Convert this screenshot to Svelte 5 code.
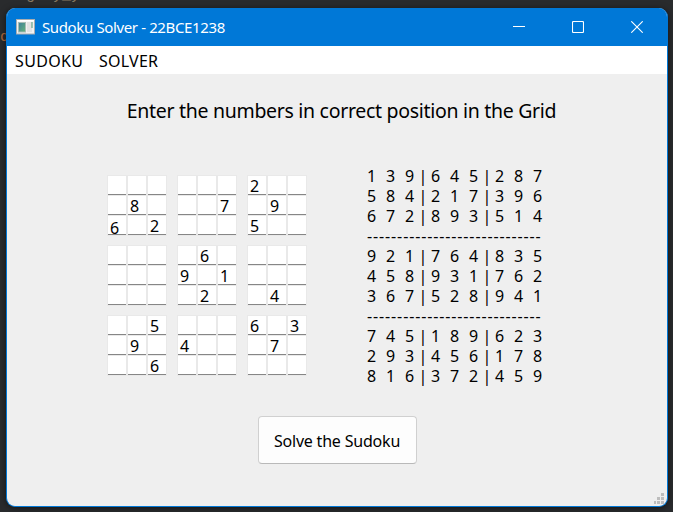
<script>
  const given = [
    '......2..', '.8...7.9.', '6.2...5..',
    '....6....', '...9.1...', '....2..4.',
    '..5...6.3', '.9.4...7.', '..6......'
  ];
  const solved = [
    '139645287', '584217396', '672893514',
    '921764835', '458931762', '367528941',
    '745189623', '293456178', '816372459'
  ];
  const idx = [0, 1, 2];
</script>

<div class="desktop">
  <span class="behind a">gray_y</span>
  <span class="behind b">ud</span>
  <div class="window">
    <header>
      <svg class="app" width="19" height="16" viewBox="0 0 19 16">
        <defs><linearGradient id="g" x1="0" y1="0" x2="1" y2="1"><stop offset="0" stop-color="#3f7f9a" /><stop offset="1" stop-color="#65b47b" /></linearGradient></defs>
        <rect x=".5" y=".5" width="18" height="14.5" fill="#f1f1f1" stroke="#a9adb0" />
        <rect x="1" y="1" width="17" height="1.5" fill="#fff" />
        <rect x="2.5" y="3.5" width="7" height="9.5" fill="url(#g)" stroke="#a7bcb5" />
        <rect x="11" y="3" width="5" height="10" fill="#e2e2e2" />
        <rect x="15.5" y="3" width="1" height="6" fill="#4f9a79" />
      </svg>
      <span class="title">Sudoku Solver - 22BCE1238</span>
      <div class="controls">
        <svg width="12" height="12" viewBox="0 0 12 12"><path d="M0 5.5H12" /></svg>
        <svg width="12" height="12" viewBox="0 0 12 12"><rect x=".5" y=".5" width="11" height="11" rx="1" /></svg>
        <svg width="12" height="12" viewBox="0 0 12 12"><path d="M.3.3 11.7 11.7M11.7.3.3 11.7" /></svg>
      </div>
    </header>
    <nav><span class="m1">SUDOKU</span><span class="m2">SOLVER</span></nav>
    <main>
      <h1>Enter the numbers in correct position in the Grid</h1>
      <div class="boards">
        <div class="grid">
          {#each idx as br}
            {#each idx as bc}
              <div class="block">
                {#each idx as r}
                  {#each idx as c}
                    {@const v = given[br * 3 + r][bc * 3 + c]}
                    <div class="cell" class:low={br === 0 && bc === 0 && r === 2 && c === 0}>{v === '.' ? '' : v}</div>
                  {/each}
                {/each}
              </div>
            {/each}
          {/each}
        </div>
        <div class="solution">
          {#each solved as row, i}
            {#if i === 3 || i === 6}<div class="dash">-----------------------------</div>{/if}
            <div class="line">
              {#each row.split('') as d, j}
                {#if j === 3 || j === 6}<span class="bar">|</span>{/if}
                <span class="digit" class:last={j % 3 === 2}>{d}</span>
              {/each}
            </div>
          {/each}
        </div>
      </div>
      <button><span>Solve the Sudoku</span></button>
    </main>
    <svg class="grip" width="11" height="11" viewBox="0 0 11 11" fill="#bdbdbd">
      <path d="M7 0h3v3H7zM3 4h3v3H3zM7 4h3v3H7zM0 8h2v3H0zM3 8h3v3H3zM7 8h3v3H7z" />
    </svg>
  </div>
</div>

<style>
  .desktop {
    position: relative;
    box-sizing: border-box;
    width: 673px;
    height: 512px;
    padding: 8px 5px 5px 6px;
    overflow: hidden;
    background: #292b2d;
    font: 16px/20px "Noto Sans", "Open Sans", sans-serif;
    color: #000;
  }
  .behind { position: absolute; font: 15px/18px "Liberation Mono", monospace; color: #8a7a62; }
  .a { left: 26px; top: -13px; }
  .b { left: -9px; top: 29px; color: #ad673c; }
  .window {
    position: relative;
    box-sizing: border-box;
    width: 662px;
    height: 499px;
    border: 1px solid #0078d7;
    border-top: 0;
    border-radius: 9px;
    overflow: hidden;
    background: #efefef;
    box-shadow: 0 1px 6px #0008;
  }
  header { display: flex; align-items: center; height: 38px; background: #0078d7; }
  .app { margin-left: 9px; }
  .title { margin-left: 7px; color: #fff; font-size: 15px; letter-spacing: -.37px; white-space: nowrap; }
  .controls { display: flex; gap: 47px; margin-left: auto; margin-right: 24px; }
  .controls svg { fill: none; stroke: #fff; stroke-width: 1.1; }
  nav { display: flex; height: 28px; line-height: 30px; background: #fff; padding-left: 8px; font-size: 16px; }
  .m1 { width: 84px; letter-spacing: .35px; }
  .m2 { letter-spacing: .25px; }
  main { display: flex; flex-direction: column; align-items: center; }
  h1 { margin: 23px 0 0 9px; font-weight: 400; font-size: 19.5px; line-height: 28px; white-space: nowrap; letter-spacing: -.3px; }
  .boards { display: flex; align-self: stretch; margin: 41px 0 0 101px; }
  .grid { display: grid; grid-template-columns: repeat(3, 58px); gap: 11px 12px; margin-top: 10px; height: 199px; }
  .block { display: grid; grid-template-columns: repeat(3, 18px); gap: 1px 2px; height: 59px; }
  .cell {
    box-sizing: border-box;
    height: 19px;
    padding-left: 2px;
    line-height: 20px;
    background: #fff;
    border-bottom: 1px solid #868686;
    box-shadow: 0 0 0 1px #e9e9e9;
  }
  .low { line-height: 24px; }
  .solution { margin-left: 61px; }
  .line { display: flex; height: 20px; }
  .digit { width: 19px; }
  .digit.last { width: 13px; }
  .bar { width: 13px; text-align: center; text-indent: -3px; }
  .dash { height: 20px; letter-spacing: .87px; white-space: nowrap; }
  button {
    box-sizing: border-box;
    width: 159px;
    height: 48px;
    margin: 30px 0 0 1px;
    padding: 2px 1px 0 0;
    background: #fdfdfd;
    border: 1px solid #d0d0d0;
    border-bottom-color: #b9b9b9;
    border-radius: 4px;
    color: #000;
    font: 16px/20px "Noto Sans", "Open Sans", sans-serif;
    letter-spacing: -.2px;
    white-space: nowrap;
  }
  .grip { position: absolute; right: 2px; bottom: 2px; }
</style>
